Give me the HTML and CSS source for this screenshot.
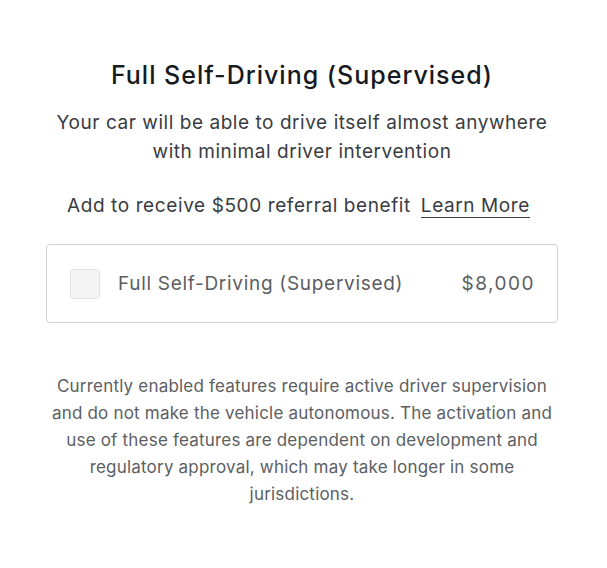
FILE: index.html
```html
<!DOCTYPE html>
<html lang="en">
<head>
<meta charset="utf-8">
<title>Full Self-Driving (Supervised)</title>
<link rel="stylesheet" href="styles.css">
</head>
<body>
<main class="panel">
  <h1 class="title">Full Self-Driving (Supervised)</h1>
  <p class="lead">Your car will be able to drive itself almost anywhere with minimal driver intervention</p>
  <p class="referral">Add to receive $500 referral benefit <a class="link" href="#">Learn More</a></p>
  <label class="option">
    <span class="check"></span>
    <span class="option-name">Full Self-Driving (Supervised)</span>
    <span class="option-price">$8,000</span>
  </label>
  <p class="disclaimer">Currently enabled features require active driver supervision and do not make the vehicle autonomous. The activation and use of these features are dependent on development and regulatory approval, which may take longer in some jurisdictions.</p>
</main>
</body>
</html>
```

FILE: styles.css
```css
* { box-sizing: border-box; }
html, body { margin: 0; padding: 0; background: #ffffff; }
body {
  font-family: Inter, "Open Sans", "Liberation Sans", sans-serif;
  color: #393c41;
}
.panel {
  width: 512px;
  margin-left: 46px;
  padding-top: 58px;
  display: flex;
  flex-direction: column;
  align-items: center;
  text-align: center;
}
.title {
  margin: 0;
  font-size: 25px;
  line-height: 34px;
  font-weight: 500;
  letter-spacing: 1px;
  color: #171a20;
}
.lead {
  margin: 16px 0 0;
  font-size: 19px;
  line-height: 29px;
  letter-spacing: 0.55px;
  width: 500px;
}
.referral {
  margin: 25px 0 0;
  padding-right: 7px;
  font-size: 19px;
  line-height: 29px;
  letter-spacing: 0.6px;
}
.link {
  color: #393c41;
  text-decoration: none;
  border-bottom: 1.5px solid #393c41;
  margin-left: 4px;
}
.option {
  align-self: stretch;
  margin-top: 24px;
  height: 79px;
  border: 1px solid #d0d1d2;
  border-radius: 4px;
  display: flex;
  align-items: center;
  padding: 0 22px 0 23px;
  color: #5c5e62;
  font-size: 19px;
  letter-spacing: 0.7px;
}
.check {
  width: 30px;
  height: 30px;
  border: 1px solid #e2e3e3;
  border-radius: 3px;
  background: #f4f4f4;
  flex: none;
}
.option-name { margin-left: 18px; flex: 1; text-align: left; }
.option-price { flex: none; letter-spacing: 1.5px; }
.disclaimer {
  margin: 50px 0 0;
  font-size: 17px;
  line-height: 27px;
  letter-spacing: 0.2px;
  color: #5c5e62;
  width: 505px;
}
```
